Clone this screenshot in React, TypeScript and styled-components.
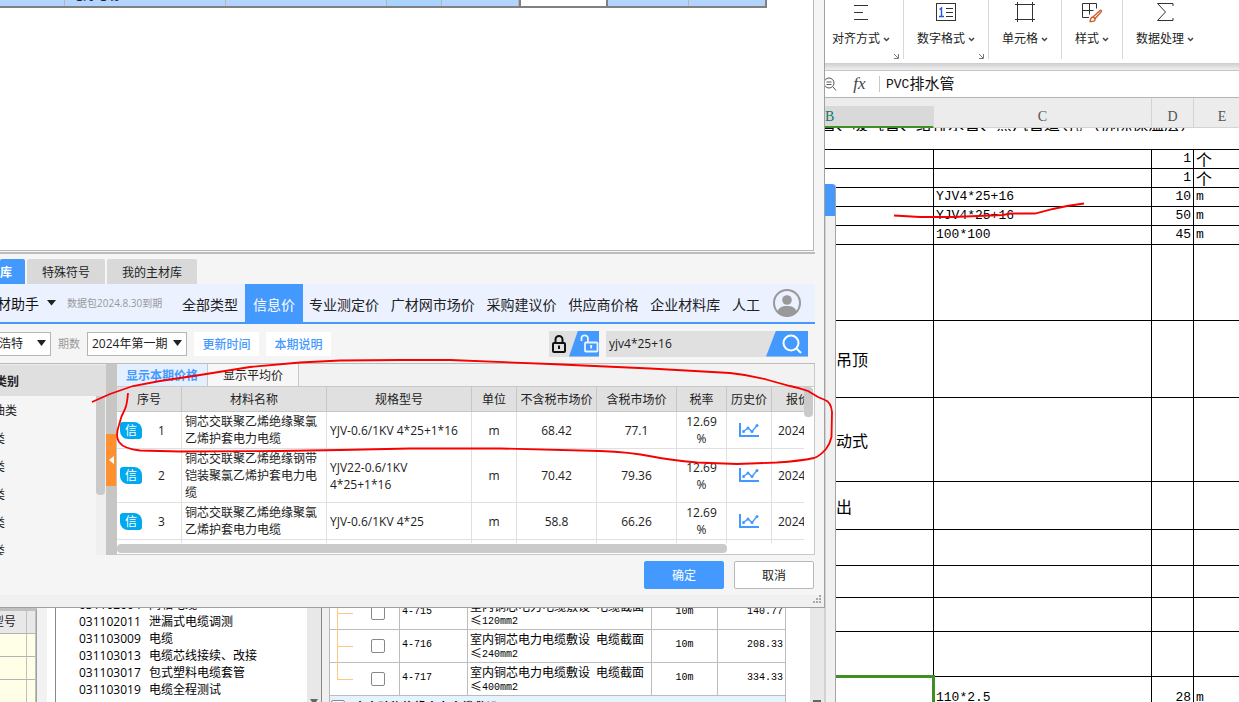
import React from "react";
import styled, { createGlobalStyle } from "styled-components";

const ui = `"Open Sans", "Noto Sans CJK SC", sans-serif`;
const song = `"Noto Sans CJK SC", sans-serif`;
const mono = `"Liberation Mono", "Noto Sans CJK SC", monospace`;
const blue = "#4499ff";

const GlobalStyle = createGlobalStyle`
  * { box-sizing: border-box; }
  body { margin: 0; background: #fff; font-family: ${ui}; font-size: 12px; line-height: 16px; color: #222; }
  button, input, select { font-family: inherit; font-size: inherit; color: inherit; margin: 0; }
  button { padding: 0; border: 0; background: none; white-space: nowrap; }
`;

const Desktop = styled.div`
  position: relative;
  display: grid;
  grid-template-columns: 825fr 414fr;
  height: 100vh;
  min-height: 702px;
  overflow: hidden;
`;

const LeftSide = styled.div`
  display: flex;
  flex-direction: column;
  min-width: 0;
  overflow: hidden;
`;

/* ---------- dialog window ---------- */

const Dialog = styled.section`
  display: flex;
  flex: none;
  flex-direction: column;
  background: #f5f5f5;
  border-right: 1px solid #a0a0a0;
  border-bottom: 1px solid #a0a0a0;
`;

const ListPane = styled.div`
  height: 251px;
  margin-right: 10px;
  background: #fff;
  border-right: 1px solid #b8b8b8;
  border-bottom: 1px solid #b8b8b8;
`;

const SelectedRow = styled.div`
  display: grid;
  grid-template-columns: 65px 161px 161px 55px 77px 89px 81px 78px;
  width: 767px;
  height: 8px;
  border-right: 2px solid #808080;
  border-bottom: 2px solid #808080;
  background: #b3d4ff;
`;

const SelectedCell = styled.div<{ $focus?: boolean; $bg?: string }>`
  display: flex;
  align-items: flex-end;
  padding: 0 0 4px 6px;
  overflow: hidden;
  line-height: 12px;
  background: ${(p) => p.$bg || "transparent"};
  border-right: 1px solid #b4b8b4;
  border-left: ${(p) => (p.$focus ? "2px solid #808080" : "0")};
  ${(p) => p.$focus && "border-right: 2px solid #808080;"}
`;

const DialogTabs = styled.div`
  display: flex;
  gap: 2px;
  height: 32px;
  margin: 1px 9px 0 0;
  padding-top: 5px;
  border-top: 2px solid #bcbcbc;
`;

const DialogTab = styled.button<{ $active?: boolean }>`
  padding: ${(p) => (p.$active ? "0 13px 0 0" : "0 15px")};
  border-radius: 2px 2px 0 0;
  background: ${(p) => (p.$active ? blue : "#d9d9d9")};
  color: ${(p) => (p.$active ? "#fff" : "#222")};
  font-weight: ${(p) => (p.$active ? 700 : 400)};
`;

const NavBar = styled.nav`
  display: flex;
  height: 40px;
  margin-right: 9px;
  background: #ebf1ff;
  border-bottom: 2px solid ${blue};
  font-size: 14px;
`;

const Brand = styled.button`
  display: flex;
  align-items: center;
  gap: 8px;
  width: 67px;
  margin-left: -3px;
  font-size: 14px;
  color: #111;
`;

const Expiry = styled.span`
  align-self: center;
  width: 111px;
  padding-left: 3px;
  font-size: 10px;
  color: #999;
  white-space: nowrap;
`;

const NavButton = styled.button<{ $active?: boolean }>`
  margin-bottom: ${(p) => (p.$active ? "-2px" : "0")};
  padding: ${(p) => (p.$active ? "0 8px" : "2px 0 0")};
  background: ${(p) => (p.$active ? blue : "transparent")};
  color: ${(p) => (p.$active ? "#fff" : "#222")};
`;

const NavRest = styled.div`
  display: flex;
  flex: 1;
  justify-content: space-between;
  margin: 0 13px 0 6px;
`;

const FirstNav = styled.div`
  display: flex;
  width: 70px;
  padding-left: 7px;
`;

const Avatar = styled.button`
  display: flex;
  align-items: center;
  margin-right: 14px;
`;

const Toolbar = styled.div`
  display: flex;
  align-items: center;
  height: 39px;
  margin-right: 16px;
`;

const SelectBox = styled.div<{ $clip?: boolean }>`
  position: relative;
  display: flex;
  width: ${(p) => (p.$clip ? "57px" : "100px")};
  margin-left: ${(p) => (p.$clip ? "-6px" : "0")};
`;

const Select = styled.select`
  appearance: none;
  width: 100%;
  height: 24px;
  padding: 0 4px;
  border: 1px solid #b4b4b4;
  border-radius: 0;
  background: #fff;
`;

const SelectArrow = styled.svg`
  position: absolute;
  top: 8px;
  right: 4px;
  pointer-events: none;
`;

const PeriodLabel = styled.label`
  width: 36px;
  padding-left: 7px;
  font-size: 11px;
  color: #999;
`;

const ToolButton = styled.button`
  width: 65px;
  height: 24px;
  margin-left: 7px;
  background: #fff;
  color: ${blue};
  font-weight: 500;
`;

const LockSwitch = styled.div`
  display: flex;
  height: 26px;
  margin: 0 7px 0 auto;
  background: #e0e0e0;
`;

const LockButton = styled.button<{ $open?: boolean }>`
  display: flex;
  align-items: center;
  justify-content: ${(p) => (p.$open ? "flex-end" : "center")};
  width: ${(p) => (p.$open ? "30px" : "20px")};
  background: ${(p) => (p.$open ? blue : "transparent")};
  clip-path: ${(p) => (p.$open ? "polygon(9px 0, 100% 0, 100% 100%, 0 100%)" : "none")};
`;

const SearchBox = styled.div`
  display: flex;
  width: 202px;
  height: 26px;
  background: #e0e0e0;
`;

const SearchInput = styled.input`
  flex: 1;
  min-width: 0;
  padding: 0 3px;
  border: 0;
  background: transparent;
`;

const SearchButton = styled.button`
  display: flex;
  align-items: center;
  justify-content: center;
  width: 42px;
  padding-left: 9px;
  background: ${blue};
  clip-path: polygon(10px 0, 100% 0, 100% 100%, 0 100%);
`;

const Content = styled.div`
  display: flex;
  height: 192px;
  margin-right: 9px;
  border-top: 1px solid #bcbcbc;
`;

const Sidebar = styled.aside`
  width: 106px;
  display: flex;
  flex-direction: column;
  overflow: hidden;
`;

const SidebarTitle = styled.div`
  height: 32px;
  padding-top: 9px;
  text-indent: -5px;
  background: #dfdfdf;
  border-top: 1px solid #ececec;
  font-weight: 700;
`;

const SidebarBody = styled.div`
  display: flex;
  flex: 1;
  min-height: 0;
  justify-content: space-between;
`;

const CategoryList = styled.ul`
  list-style: none;
  margin: 0;
  padding: 1px 0 0;
  text-indent: -7px;
  line-height: 28px;
  overflow: hidden;
`;

const SideScroll = styled.div`
  width: 10px;
  background: #efefef;
`;

const SideThumb = styled.div`
  width: 9px;
  height: 99px;
  border-radius: 0 0 4px 4px;
  background: #cacaca;
`;

const Splitter = styled.div`
  display: flex;
  align-items: center;
  width: 11px;
  background: #c8c6c4;
`;

const CollapseButton = styled.button`
  display: flex;
  align-items: center;
  justify-content: center;
  width: 10px;
  height: 52px;
  background: #ff9030;
`;

const PricePane = styled.div`
  display: flex;
  flex: 1;
  flex-direction: column;
  min-width: 0;
  border-right: 1px solid #c8c8c8;
  border-bottom: 1px solid #c8c8c8;
  background: #fff;
`;

const PriceTabs = styled.div`
  display: flex;
  height: 22px;
  background: #f2f2f2;
`;

const PriceTab = styled.button<{ $active?: boolean }>`
  width: 91px;
  border-right: 1px solid #c8c8c8;
  background: ${(p) => (p.$active ? "#e5f0ff" : "#f7f7f7")};
  color: ${(p) => (p.$active ? blue : "#222")};
  font-weight: ${(p) => (p.$active ? 700 : 400)};
`;

const PriceArea = styled.div`
  display: flex;
  flex: 1;
  min-height: 0;
  border-top: 1px solid #c8c8c8;
`;

const PriceClip = styled.div`
  flex: 1;
  min-width: 0;
  overflow: hidden;
`;

const VerticalThumb = styled.div`
  width: 9px;
  height: 30px;
  margin-right: 1px;
  border-radius: 0 4px 4px 4px;
  background: #cacaca;
`;

const HorizontalThumb = styled.div`
  width: 610px;
  height: 9px;
  margin: 1px 0;
  border-radius: 4px;
  background: #cacaca;
`;

const PriceTable = styled.table`
  width: 733px;
  table-layout: fixed;
  border-collapse: separate;
  border-spacing: 0;
  line-height: 17px;
`;

const PriceHead = styled.th<{ $last?: boolean }>`
  height: 25px;
  padding: ${(p) => (p.$last ? "0 0 0 14px" : "0")};
  text-align: ${(p) => (p.$last ? "left" : "center")};
  background: #e0e0e0;
  border-right: 1px solid #c6c6c6;
  border-bottom: 1px solid #c6c6c6;
  font-weight: 400;
  white-space: nowrap;
`;

const PriceCell = styled.td<{ $left?: boolean; $pad?: number }>`
  padding: 0 ${(p) => (p.$left ? 3 : 0)}px 0 ${(p) => p.$pad || 0}px;
  text-align: ${(p) => (p.$left ? "left" : "center")};
  border-right: 1px solid #e0e0e0;
  border-bottom: 1px solid #e0e0e0;
  overflow: hidden;
`;

const PriceRow = styled.tr<{ $h: number }>`
  height: ${(p) => p.$h}px;
`;

const IndexCell = styled.div`
  display: grid;
  grid-template-columns: 22px 1fr;
  align-items: center;
  padding: 0 0 0 3px;
`;

const InfoBadge = styled.span`
  height: 17px;
  border-radius: 3px 8px 3px 8px;
  background: #00a8f0;
  color: #fff;
  text-align: center;
`;

const Rate = styled.div`
  width: 36px;
  margin: 0 auto;
`;

const HistoryLink = styled.button`
  display: block;
  margin: 0 auto;
  height: 17px;
`;

const DialogFooter = styled.footer`
  display: flex;
  justify-content: flex-end;
  gap: 10px;
  height: 40px;
  padding: 6px 10px 6px 0;
`;

const FooterButton = styled.button<{ $primary?: boolean }>`
  width: 80px;
  border: 1px solid ${(p) => (p.$primary ? blue : "#b8b8b8")};
  border-radius: 2px;
  background: ${(p) => (p.$primary ? blue : "#fff")};
  color: ${(p) => (p.$primary ? "#fff" : "#222")};
`;

const StatusStrip = styled.div`
  display: flex;
  justify-content: flex-end;
  height: 12px;
  padding-right: 3px;
  background: #f0f0f0;
`;

/* ---------- estimate program behind the dialog ---------- */

const BackApp = styled.div`
  display: flex;
  flex: 1;
  min-height: 0;
  overflow: hidden;
  background: #f0f0f0;
`;

const SpecTable = styled.table`
  width: 37px;
  flex: none;
  height: 95px;
  align-self: flex-start;
  border-collapse: separate;
  border-spacing: 0;
  table-layout: fixed;
  border-top: 3px solid #c0c0c0;
  border-right: 1px solid #a0a0a0;
  & th { height: 23px; padding: 0; background: #e8e8e8; font-weight: 400; text-align: left; text-indent: -8px; white-space: nowrap; }
  & td { height: 23px; padding: 0; background: #ffffe8; }
  & th, & td { border-right: 1px solid #c0c0c0; border-bottom: 1px solid #b4b4b4; }
`;

const Gutter = styled.div`
  flex: none;
  width: 19px;
  border-left: 10px solid #f2f2f2;
  border-right: 1px solid #888;
  background: #fff;
`;

const CodePane = styled.div`
  display: flex;
  flex: 266 1 0;
  min-width: 0;
  background: #fff;
  border-right: 1px solid #888;
`;

const CodeList = styled.ul`
  flex: 1;
  list-style: none;
  margin: -12px 0 0;
  padding: 0 0 0 23px;
  color: #000;
  white-space: nowrap;
`;

const CodeItem = styled.li`
  display: grid;
  grid-template-columns: 70px 1fr;
  line-height: 17px;
`;

const ScrollTrack = styled.div<{ $push?: boolean }>`
  display: flex;
  align-items: flex-end;
  justify-content: center;
  width: 14px;
  margin-left: ${(p) => (p.$push ? "auto" : "0")};
  background: #e8e8e8;
`;

const QuotaPane = styled.div`
  display: flex;
  flex: 496 1 0;
  min-width: 0;
  margin-left: 7px;
  background: #fff;
  border-left: 1px solid #b8b8b8;
  border-right: 1px solid #d0d0d0;
`;

const QuotaTable = styled.table`
  width: 456px;
  flex: none;
  margin-top: -11px;
  align-self: flex-start;
  table-layout: fixed;
  border-collapse: separate;
  border-spacing: 0;
  color: #000;
  font-family: ${song};
  line-height: 14px;
`;

const QuotaCell = styled.td<{ $align?: string; $latin?: boolean }>`
  height: 33px;
  padding: ${(p) => (p.$latin ? "0 2px 3px" : "0 2px")};
  font-family: ${(p) => (p.$latin ? mono : "inherit")};
  font-size: ${(p) => (p.$latin ? "10px" : "12px")};
  text-align: ${(p) => p.$align || "left"};
  border-right: 1px solid #bcbcbc;
  border-bottom: 1px solid #bcbcbc;
  white-space: nowrap;
`;

const TreeCell = styled.div`
  display: flex;
  align-items: center;
  gap: 18px;
  padding-left: 4px;
  height: 32px;
`;

const GroupRow = styled.td`
  height: 33px;
  padding: 0 0 0 1px;
  background: #e5f3ff;
  border-right: 1px solid #bcbcbc;
`;

const GroupLabel = styled.label`
  display: flex;
  align-items: flex-start;
  gap: 9px;
  height: 26px;
  font-weight: 700;
`;

const CheckBox = styled.input`
  appearance: none;
  width: 14px;
  height: 14px;
  border: 1px solid #888;
  border-radius: 2px;
  background: #fff;
`;

const SmallMono = styled.span`
  font-family: ${mono};
  font-size: 10px;
  line-height: 0;
  vertical-align: middle;
`;

/* ---------- spreadsheet ---------- */

const Sheet = styled.div`
  position: relative;
  display: flex;
  flex-direction: column;
  min-width: 0;
  min-height: 0;
  overflow: hidden;
  background: #fff;
`;

const Ribbon = styled.div`
  display: flex;
  flex: none;
  height: 70px;
  padding-bottom: 11px;
  background: linear-gradient(#fff 0 63px, #cccccc 63px, #ececec 69px);
`;

const RibbonGroup = styled.div<{ $w: number; $pad?: number; $last?: boolean }>`
  position: relative;
  flex: none;
  width: ${(p) => p.$w}px;
  padding-right: ${(p) => p.$pad || 0}px;
  border-right: ${(p) => (p.$last ? "0" : "1px solid #d8d8d8")};
`;

const RibbonButton = styled.button`
  display: flex;
  flex-direction: column;
  align-items: center;
  gap: 7px;
  width: 100%;
  padding-top: 1px;
`;

const RibbonLabel = styled.span`
  display: flex;
  align-items: center;
  gap: 3px;
  line-height: 18px;
`;

const Launcher = styled.button`
  position: absolute;
  right: 3px;
  bottom: -1px;
  line-height: 0;
`;

const FormulaBar = styled.div`
  display: flex;
  flex: none;
  align-items: center;
  height: 28px;
  border-top: 1px solid #c6c6c6;
  border-bottom: 1px solid #b4b4b4;
`;

const ZoomGlyph = styled.svg`
  flex: none;
  margin-left: -3px;
`;

const FxButton = styled.button`
  width: 43px;
  height: 16px;
  padding-left: 3px;
  border-right: 1px solid #c8c8c8;
  font-family: "Liberation Serif", serif;
  font-size: 17px;
  line-height: 14px;
  font-style: italic;
  color: #444;
`;

const FormulaText = styled.div`
  padding: 0 0 3px 6px;
  font-family: ${song};
  font-size: 15px;
  line-height: 20px;
  color: #111;
`;

const SheetMono = styled.span`
  font-family: ${mono};
  font-size: 13px;
  line-height: 0;
  vertical-align: middle;
`;

const SheetTable = styled.table`
  width: 100%;
  flex: none;
  table-layout: fixed;
  border-collapse: separate;
  border-spacing: 0;
  font-family: ${song};
  font-size: 16px;
  line-height: 16px;
  color: #000;
`;

const ColumnHead = styled.th<{ $selected?: boolean; $line?: boolean }>`
  height: 30px;
  padding: 9px 0 0;
  border-bottom: ${(p) => (p.$selected ? "2px solid #3f9020" : "1px solid #d4d4d4")};
  border-right: 1px solid ${(p) => (p.$line ? "#d4d4d4" : "transparent")};
  background: ${(p) => (p.$selected ? "linear-gradient(#ececec 8px, #d9d9d9 8px)" : "#ececec")};
  color: ${(p) => (p.$selected ? "#0c7a68" : "#555")};
  text-align: ${(p) => (p.$selected ? "left" : "center")};
  font-family: "Liberation Serif", serif;
  font-size: 14px;
  font-weight: 400;
`;

const EastLabel = styled.span`
  padding-left: 12px;
`;

const NoteCell = styled.td`
  height: 22px;
  padding: 0;
  vertical-align: top;
  border-bottom: 1px solid #000;
`;

const NoteText = styled.div`
  display: flex;
  align-items: flex-end;
  height: 3px;
  overflow: hidden;
  text-indent: -5px;
  white-space: nowrap;
`;

const SheetCell = styled.td<{
  $h: number;
  $align?: string;
  $latin?: boolean;
  $selected?: boolean;
  $first?: boolean;
  $last?: boolean;
}>`
  position: relative;
  height: ${(p) => p.$h}px;
  padding: ${(p) => (p.$first ? "0 0 0 11px" : "0 2px")};
  font-family: ${(p) => (p.$latin ? mono : "inherit")};
  font-size: ${(p) => (p.$latin ? "13px" : "16px")};
  text-align: ${(p) => p.$align || "left"};
  border-bottom: 1px solid #000;
  border-right: ${(p) => (p.$last ? "0" : "1px solid #000")};
  ${(p) =>
    p.$selected &&
    `&::after { content: ""; position: absolute; inset: -2px -2px 0 0; border-top: 3px solid #3f9020; border-right: 3px solid #3f9020; }`}
`;

const DockStrip = styled.div`
  position: absolute;
  top: 184px;
  bottom: 0;
  left: 0;
  width: 11px;
  border-left: 1px solid #d4d4d4;
  border-right: 1px solid #a4a4a4;
  border-radius: 0 4px 0 0;
  background: #f0f0f0;
`;

const DockTab = styled.div`
  height: 32px;
  margin-left: -1px;
  border-radius: 0 3px 0 0;
  background: ${blue};
`;

const PenMarks = styled.svg`
  position: absolute;
  top: 0;
  left: 0;
  pointer-events: none;
`;

const asciiRun = /([\x20-\x7e]+)/;

function mixed(text: string, Latin: React.ElementType) {
  return text.split(asciiRun).map((part, i) => (asciiRun.test(part) ? <Latin key={i}>{part}</Latin> : part));
}

function Triangle() {
  return (
    <svg width="9" height="6" viewBox="0 0 9 6" aria-hidden="true">
      <path d="M0 0h9L4.500 5.500z" fill="#222" />
    </svg>
  );
}

function Chevron() {
  return (
    <svg width="7" height="5" viewBox="0 0 7 5" aria-hidden="true">
      <path d="M1 1l2.500 2.500L6 1" fill="none" stroke="#444" strokeWidth="1.500" />
    </svg>
  );
}

function HistoryChart() {
  return (
    <svg width="20" height="16" viewBox="0 0 20 16" aria-hidden="true">
      <path d="M1 1v13h19" fill="none" stroke={blue} strokeWidth="2" />
      <path d="M4.500 9.500L9 6l4 3.500 5-6" fill="none" stroke={blue} strokeWidth="1.400" />
      <g fill={blue}>
        <circle cx="4.500" cy="9.500" r="1.500" />
        <circle cx="9" cy="6" r="1.500" />
        <circle cx="13" cy="9.500" r="1.500" />
        <circle cx="18" cy="3.500" r="1.500" />
      </g>
    </svg>
  );
}

function TreeLine({ last }: { last: boolean }) {
  return (
    <svg width="17" height="32" viewBox="0 0 17 32" overflow="visible" aria-hidden="true">
      <g fill="#ffc880" shapeRendering="crispEdges">
        <rect x="1" y="-1" width="1" height={last ? 17 : 34} />
        <rect x="1" y="16" width="16" height="1" />
      </g>
    </svg>
  );
}

const lineProps = { fill: "none", stroke: "#333", strokeWidth: 1 };

const icons: Record<string, React.ReactNode> = {
  align: <path d="M5 4.500h14M5 11.500h9M5 18.500h14" {...lineProps} />,
  number: (
    <>
      <rect x="2.500" y="2.500" width="19" height="17" {...lineProps} />
      <path d="M5.500 8.500l2-1.500v8.500M5 15.500h5" fill="none" stroke="#2255dd" strokeWidth="1.400" />
      <path d="M12 7.500h7M12 11.500h7M12 15.500h7" {...lineProps} />
    </>
  ),
  cell: <path d="M4.500 1v20M19.500 1v20M2 3.500h20M2 18.500h20" {...lineProps} />,
  style: (
    <>
      <path d="M9 16.500H2.500v-14h14v5M2.500 9.500h11M9.500 2.500v11" {...lineProps} />
      <path d="M20 9.500c1-.8 2 .2 1.200 1.200l-6 6.800-2-1.800zM13 16c-2 0-2.500 1.500-3 4.500 3 .3 5-.5 5.200-2.500z" fill="#fff" stroke="#d06030" strokeWidth="1.400" />
    </>
  ),
  sum: <path d="M20 5V2.500H4.500l8 8.500-8 8.500H20V17" {...lineProps} />,
};

const ribbon = [
  { label: "对齐方式", icon: "align", w: 79, pad: 6, launcher: true },
  { label: "数字格式", icon: "number", w: 85, launcher: true },
  { label: "单元格", icon: "cell", w: 73 },
  { label: "样式", icon: "style", w: 61 },
  { label: "数据处理", icon: "sum", w: 84, last: true },
];

const navItems = ["专业测定价", "广材网市场价", "采购建议价", "供应商价格", "企业材料库", "人工"];

const priceHeads = ["序号", "材料名称", "规格型号", "单位", "不含税市场价", "含税市场价", "税率", "历史价", "报价"];
const priceCols = [65, 145, 145, 45, 80, 80, 50, 45, 78];

const prices = [
  { h: 37, name: "铜芯交联聚乙烯绝缘聚氯乙烯护套电力电缆", spec: "YJV-0.6/1KV 4*25+1*16", net: "68.42", gross: "77.1" },
  { h: 54, name: "铜芯交联聚乙烯绝缘钢带铠装聚氯乙烯护套电力电缆", spec: "YJV22-0.6/1KV 4*25+1*16", net: "70.42", gross: "79.36" },
  { h: 37, name: "铜芯交联聚乙烯绝缘聚氯乙烯护套电力电缆", spec: "YJV-0.6/1KV 4*25", net: "58.8", gross: "66.26" },
];

const codes = [
  ["031102004", "同轴电缆"],
  ["031102011", "泄漏式电缆调测"],
  ["031103009", "电缆"],
  ["031103013", "电缆芯线接续、改接"],
  ["031103017", "包式塑料电缆套管"],
  ["031103019", "电缆全程测试"],
];

const quotas = [
  ["4-715", "≤120mm2", "140.77"],
  ["4-716", "≤240mm2", "208.33"],
  ["4-717", "≤400mm2", "334.33"],
];

const sheetRows = [
  { h: 19, b: "", c: "", d: "1", e: "个" },
  { h: 19, b: "", c: "", d: "1", e: "个" },
  { h: 19, b: "", c: "YJV4*25+16", d: "10", e: "m" },
  { h: 19, b: "", c: "YJV4*25+16", d: "50", e: "m" },
  { h: 19, b: "", c: "100*100", d: "45", e: "m" },
  { h: 76, b: "", c: "", d: "", e: "" },
  { h: 77, b: "吊顶", c: "", d: "", e: "" },
  { h: 84, b: "动式", c: "", d: "", e: "" },
  { h: 48, b: "出", c: "", d: "", e: "" },
  { h: 36, b: "", c: "", d: "", e: "" },
  { h: 32, b: "", c: "", d: "", e: "" },
  { h: 34, b: "", c: "", d: "", e: "" },
  { h: 45, b: "", c: "", d: "", e: "" },
  { h: 42, b: "", c: "110*2.5", d: "28", e: "m", selected: true },
];

function PriceDialog() {
  return (
    <Dialog>
      <ListPane>
        <SelectedRow>
          <SelectedCell />
          <SelectedCell>电力电缆</SelectedCell>
          <SelectedCell />
          <SelectedCell $bg="#a8d4ff" />
          <SelectedCell />
          <SelectedCell $focus $bg="#fff" />
          <SelectedCell />
        </SelectedRow>
      </ListPane>
      <DialogTabs>
        <DialogTab $active>库</DialogTab>
        <DialogTab>特殊符号</DialogTab>
        <DialogTab>我的主材库</DialogTab>
      </DialogTabs>
      <NavBar>
        <Brand>
          材助手
          <Triangle />
        </Brand>
        <Expiry>数据包2024.8.30到期</Expiry>
        <FirstNav>
          <NavButton>全部类型</NavButton>
        </FirstNav>
        <NavButton $active>信息价</NavButton>
        <NavRest>
          {navItems.map((item) => (
            <NavButton key={item}>{item}</NavButton>
          ))}
        </NavRest>
        <Avatar aria-label="用户">
          <svg width="28" height="28" viewBox="0 0 28 28">
            <circle cx="14" cy="14" r="13" fill="#ebf1ff" stroke="#999" strokeWidth="2" />
            <circle cx="14" cy="11" r="4.800" fill="#999" />
            <path d="M4.500 23c1-5 5-6 9.500-6s8.500 1 9.500 6c-2.500 3-6 4.500-9.500 4.500S7 26 4.500 23z" fill="#999" />
          </svg>
        </Avatar>
      </NavBar>
      <Toolbar>
        <SelectBox $clip>
          <Select aria-label="地区" defaultValue="浩特">
            <option>浩特</option>
          </Select>
          <SelectArrow width="10" height="7" viewBox="0 0 10 7">
            <path d="M0 0h9L4.500 6z" fill="#222" />
          </SelectArrow>
        </SelectBox>
        <PeriodLabel htmlFor="period">期数</PeriodLabel>
        <SelectBox>
          <Select id="period" defaultValue="2024年第一期">
            <option>2024年第一期</option>
          </Select>
          <SelectArrow width="10" height="7" viewBox="0 0 10 7">
            <path d="M0 0h9L4.500 6z" fill="#222" />
          </SelectArrow>
        </SelectBox>
        <ToolButton>更新时间</ToolButton>
        <ToolButton>本期说明</ToolButton>
        <LockSwitch>
          <LockButton aria-label="锁定">
            <svg width="14" height="18" viewBox="0 0 14 18" fill="none" stroke="#111" strokeWidth="2">
              <rect x="1" y="8" width="12" height="9" rx="1" />
              <path d="M3.500 8V4.500a3.500 3.500 0 0 1 7 0V8" />
              <path d="M7 11v3M6 11.500h2" />
            </svg>
          </LockButton>
          <LockButton $open aria-label="解锁">
            <svg width="20" height="20" viewBox="0 0 20 20" fill="none" stroke="#eaf4ff" strokeWidth="1.800">
              <rect x="6" y="8.500" width="12.500" height="9" rx="1" />
              <path d="M2.500 7V4.500a3.200 3.200 0 0 1 6.400 0v4" />
              <path d="M12.200 11.500v3M11.200 12h2" />
            </svg>
          </LockButton>
        </LockSwitch>
        <SearchBox>
          <SearchInput aria-label="搜索材料" defaultValue="yjv4*25+16" />
          <SearchButton aria-label="搜索">
            <svg width="20" height="20" viewBox="0 0 20 20" fill="none" stroke="#fff" strokeWidth="2">
              <circle cx="9" cy="9" r="7.500" />
              <path d="M14.500 14.500L19 19" />
            </svg>
          </SearchButton>
        </SearchBox>
      </Toolbar>
      <Content>
        <Sidebar>
          <SidebarTitle>类别</SidebarTitle>
          <SidebarBody>
            <CategoryList>
              <li>油类</li>
              <li>类</li>
              <li>类</li>
              <li>类</li>
              <li>类</li>
              <li>类</li>
            </CategoryList>
            <SideScroll>
              <SideThumb />
            </SideScroll>
          </SidebarBody>
        </Sidebar>
        <Splitter>
          <CollapseButton aria-label="收起">
            <svg width="5" height="8" viewBox="0 0 5 8">
              <path d="M5 0v8L0 4z" fill="#fff" />
            </svg>
          </CollapseButton>
        </Splitter>
        <PricePane>
          <PriceTabs>
            <PriceTab $active>显示本期价格</PriceTab>
            <PriceTab>显示平均价</PriceTab>
          </PriceTabs>
          <PriceArea>
            <PriceClip>
              <PriceTable>
                <colgroup>
                  {priceCols.map((w, i) => (
                    <col key={i} width={w} />
                  ))}
                </colgroup>
                <thead>
                  <tr>
                    {priceHeads.map((h, i) => (
                      <PriceHead key={h} $last={i === 8}>
                        {h}
                      </PriceHead>
                    ))}
                  </tr>
                </thead>
                <tbody>
                  {prices.map((p, i) => (
                    <PriceRow key={i} $h={p.h}>
                      <PriceCell>
                        <IndexCell>
                          <InfoBadge>信</InfoBadge>
                          <span>{i + 1}</span>
                        </IndexCell>
                      </PriceCell>
                      <PriceCell $left $pad={3}>{p.name}</PriceCell>
                      <PriceCell $left $pad={3}>{p.spec}</PriceCell>
                      <PriceCell>m</PriceCell>
                      <PriceCell>{p.net}</PriceCell>
                      <PriceCell>{p.gross}</PriceCell>
                      <PriceCell>
                        <Rate>
                          12.69
                          <br />%
                        </Rate>
                      </PriceCell>
                      <PriceCell>
                        <HistoryLink aria-label="历史价">
                          <HistoryChart />
                        </HistoryLink>
                      </PriceCell>
                      <PriceCell $left $pad={6}>2024</PriceCell>
                    </PriceRow>
                  ))}
                  <PriceRow $h={37}>
                    {priceCols.map((_, i) => (
                      <PriceCell key={i} />
                    ))}
                  </PriceRow>
                </tbody>
              </PriceTable>
            </PriceClip>
            <VerticalThumb />
          </PriceArea>
          <HorizontalThumb />
        </PricePane>
      </Content>
      <DialogFooter>
        <FooterButton $primary>确定</FooterButton>
        <FooterButton>取消</FooterButton>
      </DialogFooter>
      <StatusStrip>
        <svg width="8" height="9" viewBox="0 0 8 9" fill="#a8a8a8" aria-hidden="true">
          <path d="M6 0h2v2H6zM6 3h2v2H6zM6 6h2v2H6zM3 3h2v2H3zM3 6h2v2H3zM0 6h2v2H0z" />
        </svg>
      </StatusStrip>
    </Dialog>
  );
}

function EstimateApp() {
  return (
    <BackApp>
      <SpecTable>
        <colgroup>
          <col width="27" />
          <col width="9" />
        </colgroup>
        <thead>
          <tr>
            <th>型号</th>
            <th />
          </tr>
        </thead>
        <tbody>
          {[0, 1, 2].map((r) => (
            <tr key={r}>
              <td />
              <td />
            </tr>
          ))}
        </tbody>
      </SpecTable>
      <Gutter />
      <CodePane>
        <CodeList>
          {codes.map(([code, name]) => (
            <CodeItem key={code}>
              <span>{code}</span>
              <span>{name}</span>
            </CodeItem>
          ))}
        </CodeList>
        <ScrollTrack>
          <svg width="8" height="3" viewBox="0 0 8 3">
            <path d="M0 0h8L6 3H2z" fill="#666" />
          </svg>
        </ScrollTrack>
      </CodePane>
      <QuotaPane>
        <QuotaTable>
          <colgroup>
            <col width="70" />
            <col width="68" />
            <col width="184" />
            <col width="66" />
            <col width="68" />
          </colgroup>
          <tbody>
            {quotas.map(([code, size, price], i) => (
              <tr key={code}>
                <QuotaCell>
                  <TreeCell>
                    <TreeLine last={i === quotas.length - 1} />
                    <CheckBox type="checkbox" aria-label={code} />
                  </TreeCell>
                </QuotaCell>
                <QuotaCell $latin>{code}</QuotaCell>
                <QuotaCell>
                  {mixed("室内铜芯电力电缆敷设 电缆截面", SmallMono)}
                  <br />
                  {mixed(size, SmallMono)}
                </QuotaCell>
                <QuotaCell $latin $align="center">10m</QuotaCell>
                <QuotaCell $latin $align="right">{price}</QuotaCell>
              </tr>
            ))}
            <tr>
              <GroupRow colSpan={5}>
                <GroupLabel>
                  <CheckBox type="checkbox" />
                  室内矿物绝缘电力电缆敷设
                </GroupLabel>
              </GroupRow>
            </tr>
          </tbody>
        </QuotaTable>
        <ScrollTrack $push>
          <svg width="8" height="2" viewBox="0 0 8 2">
            <path d="M0 0h8v2H0z" fill="#666" />
          </svg>
        </ScrollTrack>
      </QuotaPane>
    </BackApp>
  );
}

function Spreadsheet() {
  return (
    <Sheet>
      <Ribbon>
        {ribbon.map((g) => (
          <RibbonGroup key={g.label} $w={g.w} $pad={g.pad} $last={g.last}>
            <RibbonButton>
              <svg width="24" height="22" viewBox="0 0 24 22" aria-hidden="true">
                {icons[g.icon]}
              </svg>
              <RibbonLabel>
                {g.label}
                <Chevron />
              </RibbonLabel>
            </RibbonButton>
            {g.launcher && (
              <Launcher aria-label={g.label + "设置"}>
                <svg width="7" height="7" viewBox="0 0 7 7">
                  <path d="M1 1l4 4M5.500 1v4.500H1" fill="none" stroke="#777" />
                </svg>
              </Launcher>
            )}
          </RibbonGroup>
        ))}
      </Ribbon>
      <FormulaBar>
        <ZoomGlyph width="15" height="16" viewBox="0 0 15 16" fill="none" stroke="#555">
          <circle cx="7" cy="7" r="5" />
          <path d="M4.500 6h5M4.500 8.500h5M11 11l3 3.500" />
        </ZoomGlyph>
        <FxButton>fx</FxButton>
        <FormulaText>{mixed("PVC排水管", SheetMono)}</FormulaText>
      </FormulaBar>
      <SheetTable>
        <colgroup>
          <col width="109" />
          <col width="218" />
          <col width="42" />
          <col />
        </colgroup>
        <thead>
          <tr>
            <ColumnHead $selected>B</ColumnHead>
            <ColumnHead $line>C</ColumnHead>
            <ColumnHead $line>D</ColumnHead>
            <ColumnHead>
              <EastLabel>E</EastLabel>
            </ColumnHead>
          </tr>
        </thead>
        <tbody>
          <tr>
            <NoteCell colSpan={4}>
              <NoteText>管、暖气管、给排水管、蒸汽管道等。（拆除保温层）</NoteText>
            </NoteCell>
          </tr>
          {sheetRows.map((r, i) => (
            <tr key={i}>
              <SheetCell $h={r.h} $first $selected={r.selected}>{r.b}</SheetCell>
              <SheetCell $h={r.h} $latin>{r.c}</SheetCell>
              <SheetCell $h={r.h} $latin $align="right">{r.d}</SheetCell>
              <SheetCell $h={r.h} $latin={asciiRun.test(r.e)} $last>{r.e}</SheetCell>
            </tr>
          ))}
        </tbody>
      </SheetTable>
      <DockStrip>
        <DockTab />
      </DockStrip>
    </Sheet>
  );
}

export default function App() {
  return (
    <>
      <GlobalStyle />
      <Desktop>
        <LeftSide>
          <PriceDialog />
          <EstimateApp />
        </LeftSide>
        <Spreadsheet />
        <PenMarks width="1239" height="702" viewBox="0 0 1239 702" fill="none" stroke="#f60000" strokeWidth="1.800" aria-hidden="true">
          <path d="M92 402L110 394L133 386L160 381L200 375L250 367L300 362.500L340 360.500L400 360L450 360L550 364L650 368.500L730 373Q750 375 768 380L790 386Q800 388 808 391L818 397L825 400Q831 402 832 412L831.500 437Q830 444 826 449Q820 456 814 458Q800 461 777 462.500L737 464L697 462.500Q670 460 652 456.500Q630 452 600 451L500 448.500L410 448.500L340 450L280 451L180 451.500L140 450.500Q124 449 119 442Q115 436 119 425Q121 416 125 409Q127 405 128 393" />
          <path d="M894 215.500L920 217H953L1003 215L1010 213.500H1035L1053 209L1067 206L1084 203.500" />
        </PenMarks>
      </Desktop>
    </>
  );
}
